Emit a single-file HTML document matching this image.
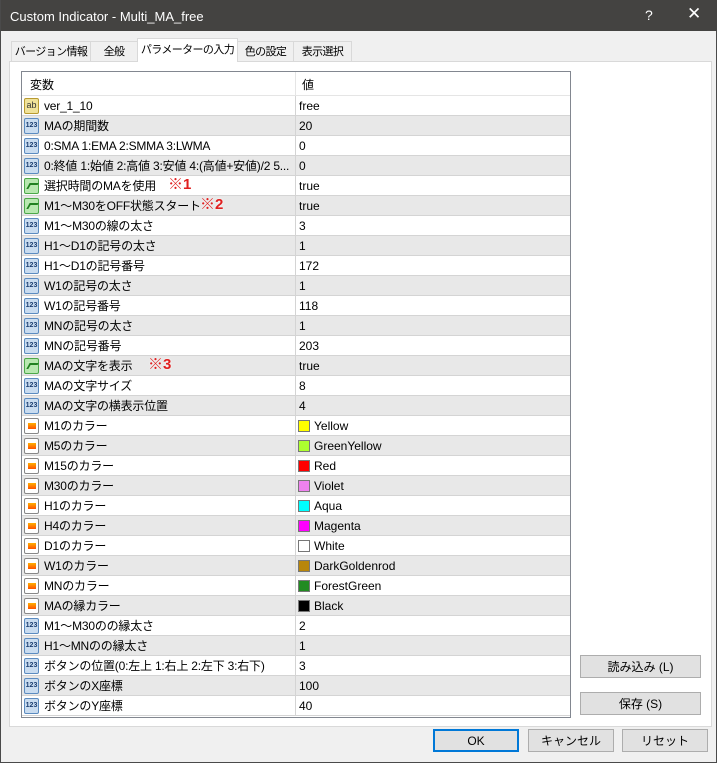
<!DOCTYPE html><html><head><meta charset="utf-8"><style>
*{box-sizing:border-box;margin:0;padding:0}
body{width:717px;height:763px;overflow:hidden;background:#f0f0f0;font-family:"Liberation Sans","Noto Sans CJK JP",sans-serif;font-size:12px;line-height:14px;color:#000;position:relative}
.win{position:absolute;left:0;top:0;width:717px;height:763px;border:1px solid #4a4a4a;border-top:none}
.title{position:absolute;left:0;top:0;width:717px;height:31px;background:#444341;color:#fff;font-size:13px;line-height:15px;padding:9px 0 0 9px}
.title .q{position:absolute;left:644px;top:8px;font-size:14px}
.title .x{position:absolute;left:686px;top:6px;font-size:17px}
.tab{position:absolute;top:41px;height:20px;background:#f0f0f0;border:1px solid #d9d9d9;border-bottom:none;font-size:11px;padding-top:3px;text-align:center;white-space:nowrap;overflow:hidden;letter-spacing:-0.6px}
.tab.a{top:38px;height:24px;background:#fff;z-index:2;padding-top:4px}
.panel{position:absolute;left:8px;top:61px;width:703px;height:666px;background:#fff;border:1px solid #d9d9d9}
.tbl{position:absolute;left:20px;top:71px;width:550px;height:647px;border:1px solid #828790;background:#fff;overflow:hidden}
.hdr{height:24px;position:relative;border-bottom:1px solid #e5e5e5}
.hdr span{position:absolute;top:6px}
.r{height:20px;position:relative;border-bottom:1px solid #d4d4d4}
.r:nth-child(even){background:#e8e8e8}
.r .n{position:absolute;left:22px;top:3px;white-space:nowrap;letter-spacing:-0.2px}
.r .v{position:absolute;left:277px;top:3px;white-space:nowrap}
.r .d{position:absolute;left:273px;top:0;width:1px;height:20px;background:#d4d4d4}
.hdr .d{position:absolute;left:273px;top:0;width:1px;height:25px;background:#e5e5e5}
.i{position:absolute;left:2px;top:2px;width:15px;height:16px;border-radius:2px}
.i.b{background:#c9dcf0;border:1px solid #5b8bc0;font-size:7px;color:#1a3d70;font-weight:bold;text-align:center;line-height:13px}
.i.s{background:#f0e29a;border:1px solid #b89a30;font-size:9px;color:#333;text-align:center;line-height:13px}
.i.g{background:#b8e8b0;border:1px solid #4ca84a}
.i.g:after{content:"";position:absolute;left:3px;top:4px;width:7px;height:4px;border-left:2px solid #208020;border-top:2px solid #208020;transform:skewX(-30deg)}
.i.c{background:#fff;border:1px solid #888}
.i.c:after{content:"";position:absolute;left:3px;top:4px;width:8px;height:6px;background:linear-gradient(#ffb000,#ff5000)}
.sw{display:inline-block;width:12px;height:12px;border:1px solid #777;vertical-align:-2px;margin-right:4px;margin-left:-1px}
.mk{position:absolute;color:#e02020;font-weight:bold;font-size:15px;top:1px;line-height:16px;text-shadow:0 0 2px #fff}
.btn{position:absolute;height:23px;background:#e1e1e1;border:1px solid #adadad;text-align:center;font-size:12px;padding-top:4px}
.btn.ok{border:2px solid #0078d7;padding-top:3px}
</style></head><body><div class="win">
<div class="title">Custom Indicator - Multi_MA_free<span class="q">?</span><span class="x">✕</span></div>
<div class="tab" style="left:10px;width:80px">バージョン情報</div>
<div class="tab" style="left:89px;width:48px">全般</div>
<div class="tab a" style="left:136px;width:101px">パラメーターの入力</div>
<div class="tab" style="left:236px;width:57px">色の設定</div>
<div class="tab" style="left:292px;width:59px">表示選択</div>
<div class="panel"></div>
<div class="tbl">
<div class="hdr"><span style="left:8px">変数</span><span class="d"></span><span style="left:280px">値</span></div>
<div>
<div class="r"><span class="i s">ab</span><span class="n">ver_1_10</span><span class="d"></span><span class="v">free</span></div>
<div class="r"><span class="i b">123</span><span class="n">MAの期間数</span><span class="d"></span><span class="v">20</span></div>
<div class="r"><span class="i b">123</span><span class="n">0:SMA 1:EMA 2:SMMA 3:LWMA</span><span class="d"></span><span class="v">0</span></div>
<div class="r"><span class="i b">123</span><span class="n">0:終値 1:始値 2:高値 3:安値 4:(高値+安値)/2 5...</span><span class="d"></span><span class="v">0</span></div>
<div class="r"><span class="i g"></span><span class="n">選択時間のMAを使用</span><span class="mk" style="left:146px">※1</span><span class="d"></span><span class="v">true</span></div>
<div class="r"><span class="i g"></span><span class="n">M1～M30をOFF状態スタート</span><span class="mk" style="left:178px">※2</span><span class="d"></span><span class="v">true</span></div>
<div class="r"><span class="i b">123</span><span class="n">M1～M30の線の太さ</span><span class="d"></span><span class="v">3</span></div>
<div class="r"><span class="i b">123</span><span class="n">H1～D1の記号の太さ</span><span class="d"></span><span class="v">1</span></div>
<div class="r"><span class="i b">123</span><span class="n">H1～D1の記号番号</span><span class="d"></span><span class="v">172</span></div>
<div class="r"><span class="i b">123</span><span class="n">W1の記号の太さ</span><span class="d"></span><span class="v">1</span></div>
<div class="r"><span class="i b">123</span><span class="n">W1の記号番号</span><span class="d"></span><span class="v">118</span></div>
<div class="r"><span class="i b">123</span><span class="n">MNの記号の太さ</span><span class="d"></span><span class="v">1</span></div>
<div class="r"><span class="i b">123</span><span class="n">MNの記号番号</span><span class="d"></span><span class="v">203</span></div>
<div class="r"><span class="i g"></span><span class="n">MAの文字を表示</span><span class="mk" style="left:126px">※3</span><span class="d"></span><span class="v">true</span></div>
<div class="r"><span class="i b">123</span><span class="n">MAの文字サイズ</span><span class="d"></span><span class="v">8</span></div>
<div class="r"><span class="i b">123</span><span class="n">MAの文字の横表示位置</span><span class="d"></span><span class="v">4</span></div>
<div class="r"><span class="i c"></span><span class="n">M1のカラー</span><span class="d"></span><span class="v"><span class="sw" style="background:#ff0"></span>Yellow</span></div>
<div class="r"><span class="i c"></span><span class="n">M5のカラー</span><span class="d"></span><span class="v"><span class="sw" style="background:#adff2f"></span>GreenYellow</span></div>
<div class="r"><span class="i c"></span><span class="n">M15のカラー</span><span class="d"></span><span class="v"><span class="sw" style="background:#f00"></span>Red</span></div>
<div class="r"><span class="i c"></span><span class="n">M30のカラー</span><span class="d"></span><span class="v"><span class="sw" style="background:#ee82ee"></span>Violet</span></div>
<div class="r"><span class="i c"></span><span class="n">H1のカラー</span><span class="d"></span><span class="v"><span class="sw" style="background:#0ff"></span>Aqua</span></div>
<div class="r"><span class="i c"></span><span class="n">H4のカラー</span><span class="d"></span><span class="v"><span class="sw" style="background:#f0f"></span>Magenta</span></div>
<div class="r"><span class="i c"></span><span class="n">D1のカラー</span><span class="d"></span><span class="v"><span class="sw" style="background:#fff"></span>White</span></div>
<div class="r"><span class="i c"></span><span class="n">W1のカラー</span><span class="d"></span><span class="v"><span class="sw" style="background:#b8860b"></span>DarkGoldenrod</span></div>
<div class="r"><span class="i c"></span><span class="n">MNのカラー</span><span class="d"></span><span class="v"><span class="sw" style="background:#228b22"></span>ForestGreen</span></div>
<div class="r"><span class="i c"></span><span class="n">MAの縁カラー</span><span class="d"></span><span class="v"><span class="sw" style="background:#000"></span>Black</span></div>
<div class="r"><span class="i b">123</span><span class="n">M1～M30のの縁太さ</span><span class="d"></span><span class="v">2</span></div>
<div class="r"><span class="i b">123</span><span class="n">H1～MNのの縁太さ</span><span class="d"></span><span class="v">1</span></div>
<div class="r"><span class="i b">123</span><span class="n">ボタンの位置(0:左上 1:右上 2:左下 3:右下)</span><span class="d"></span><span class="v">3</span></div>
<div class="r"><span class="i b">123</span><span class="n">ボタンのX座標</span><span class="d"></span><span class="v">100</span></div>
<div class="r"><span class="i b">123</span><span class="n">ボタンのY座標</span><span class="d"></span><span class="v">40</span></div>
</div></div>
<div class="btn" style="left:579px;top:655px;width:121px">読み込み (L)</div>
<div class="btn" style="left:579px;top:692px;width:121px">保存 (S)</div>
<div class="btn ok" style="left:432px;top:729px;width:86px">OK</div>
<div class="btn" style="left:527px;top:729px;width:86px">キャンセル</div>
<div class="btn" style="left:621px;top:729px;width:86px">リセット</div>
</div></body></html>
